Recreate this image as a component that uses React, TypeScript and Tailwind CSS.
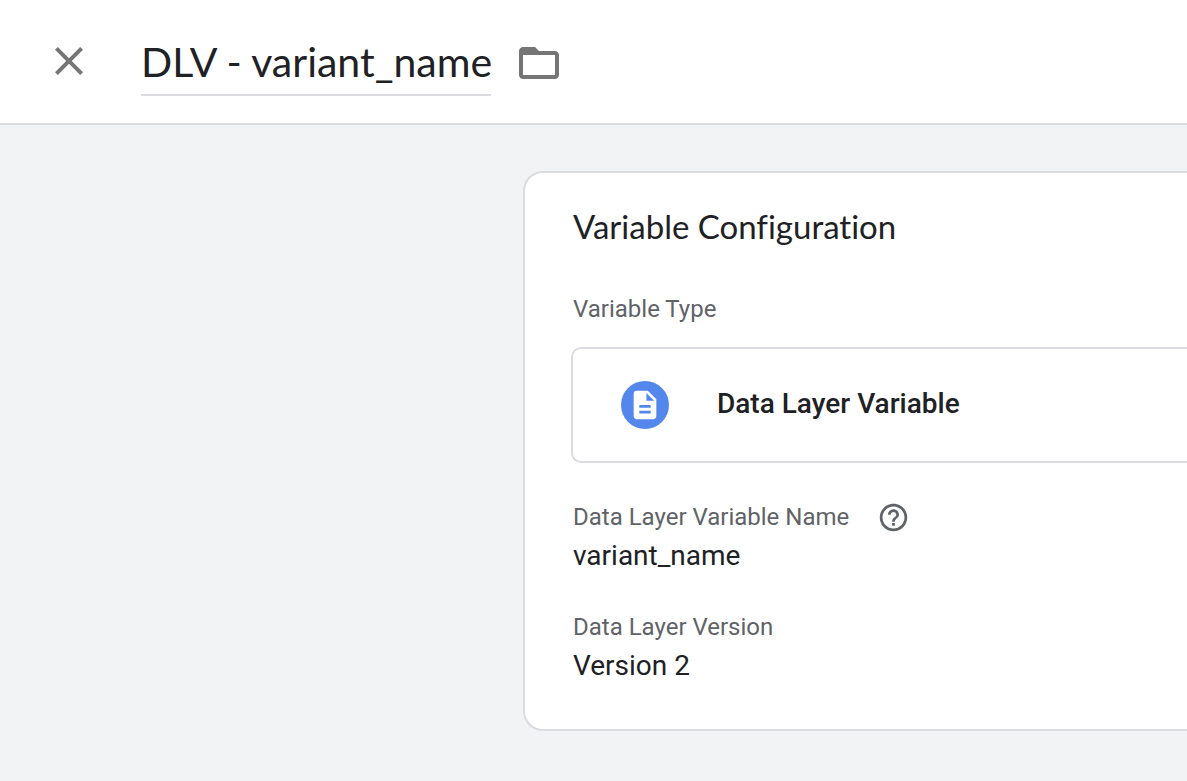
import React from "react";

type IconProps = { d: string; className: string };

function Icon({ d, className }: IconProps) {
  return (
    <svg viewBox="0 0 24 24" fill="currentColor" aria-hidden="true" className={className}>
      <path d={d} />
    </svg>
  );
}

const CLOSE =
  "M19 6.41L17.59 5 12 10.59 6.41 5 5 6.41 10.59 12 5 17.59 6.41 19 12 13.41 17.59 19 19 17.59 13.41 12z";
const FOLDER =
  "M20 6h-8l-2-2H4c-1.1 0-1.99.9-1.99 2L2 18c0 1.1.9 2 2 2h16c1.1 0 2-.9 2-2V8c0-1.1-.9-2-2-2zm0 12H4V8h16v10z";
const HELP =
  "M11 18h2v-2h-2v2zm1-16C6.48 2 2 6.48 2 12s4.48 10 10 10 10-4.48 10-10S17.52 2 12 2zm0 18c-4.41 0-8-3.59-8-8s3.59-8 8-8 8 3.59 8 8-3.59 8-8 8zm0-14c-2.21 0-4 1.79-4 4h2c0-1.1.9-2 2-2s2 .9 2 2c0 2-3 1.75-3 5h2c0-2.25 3-2.5 3-5 0-2.21-1.79-4-4-4z";
const DOCUMENT =
  "M14 2H6c-1.1 0-1.99.9-1.99 2L4 20c0 1.1.89 2 1.99 2H18c1.1 0 2-.9 2-2V8l-6-6zm2 16H8v-2h8v2zm0-4H8v-2h8v2zm-3-5V3.5L18.5 9H13z";

export default function App() {
  return (
    <div className="flex min-h-screen flex-col overflow-x-hidden bg-[#f1f3f4] font-[Roboto,sans-serif] text-[#202124]">
      <header className="flex items-start border-b-2 border-[#dadce0] bg-white pt-7 pb-[27px] pl-[45px]">
        <button type="button" aria-label="Close" className="mt-[9px] text-[#757575]">
          <Icon d={CLOSE} className="size-12" />
        </button>
        <input
          type="text"
          aria-label="Variable name"
          defaultValue="DLV - variant_name"
          className="ml-12 h-[68px] w-[350px] border-b-2 border-[#dadce0] bg-transparent font-[Lato,sans-serif] text-[41px] outline-none"
        />
        <button type="button" aria-label="Choose folder" className="mt-[11px] ml-6 text-[#757575]">
          <Icon d={FOLDER} className="size-12" />
        </button>
      </header>

      <main className="pt-[46px] pb-[50px] pl-[523px]">
        <section className="flex flex-col rounded-l-[20px] border-2 border-r-0 border-[#dadce0] bg-white pt-[31px] pb-[42px] pl-12">
          <h1 className="font-[Lato,sans-serif] text-[33px] leading-[44px] [font-variant-ligatures:none]">
            Variable Configuration
          </h1>

          <h2 className="mt-[45px] text-2xl text-[#5f6368]">Variable Type</h2>
          <button
            type="button"
            className="mt-[22px] -ml-0.5 flex h-[116px] items-center gap-12 rounded-l-[10px] border-2 border-r-0 border-[#dadce0] pl-12 text-left"
          >
            <span className="flex size-12 items-center justify-center rounded-full bg-[#5487ec] text-white">
              <Icon d={DOCUMENT} className="size-[34px]" />
            </span>
            <span className="pb-0.5 text-[28px] font-medium">Data Layer Variable</span>
          </button>

          <dl className="mt-9">
            <dt className="flex h-9 items-center gap-7 text-2xl text-[#5f6368]">
              Data Layer Variable Name
              <button type="button" aria-label="Help">
                <Icon d={HELP} className="size-[33px]" />
              </button>
            </dt>
            <dd className="text-[28px] leading-[42px]">variant_name</dd>
            <dt className="mt-8 flex h-9 items-center text-2xl text-[#5f6368]">Data Layer Version</dt>
            <dd className="text-[28px] leading-[42px]">Version 2</dd>
          </dl>
        </section>
      </main>
    </div>
  );
}
